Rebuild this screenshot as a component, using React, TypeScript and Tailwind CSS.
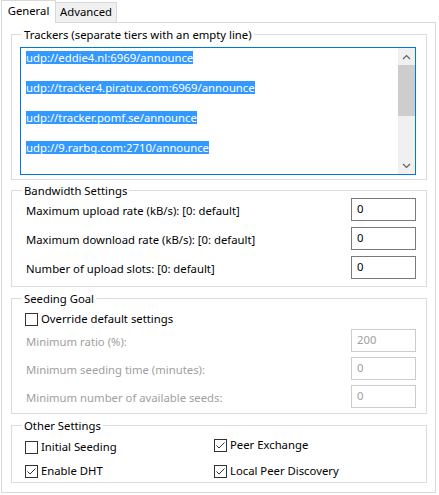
import React from 'react';

const trackers = [
  'udp://eddie4.nl:6969/announce',
  '',
  'udp://tracker4.piratux.com:6969/announce',
  '',
  'udp://tracker.pomf.se/announce',
  '',
  'udp://9.rarbg.com:2710/announce',
  '',
  '',
];

function Check({ checked }: { checked: boolean }) {
  return (
    <span className="w-[13px] h-[13px] border border-[#333333] bg-white shrink-0 flex items-center justify-center">
      {checked && (
        <svg width="11" height="11" viewBox="0 0 11 11">
          <path d="M1.5 5.5 L4 8 L9.5 2.5" fill="none" stroke="#333333" strokeWidth="1" />
        </svg>
      )}
    </span>
  );
}

function Group({ title, height, children }: { title: string; height: string; children: React.ReactNode }) {
  return (
    <div className={`border border-[#dcdcdc] ${height}`}>
      <span className="block w-fit -mt-[8px] ml-[10px] px-[2px] h-[15px] leading-[15px] bg-white text-black">
        {title}
      </span>
      {children}
    </div>
  );
}

function Field({ label, value, disabled }: { label: string; value: string; disabled?: boolean }) {
  return (
    <div className="flex items-center h-[23px] pl-[14px] pr-[10px]">
      <span className={`flex-1 mt-[4px] ${disabled ? 'text-[#a0a0a0]' : 'text-black'}`}>{label}</span>
      <div
        className={`w-[65px] h-[23px] border flex items-center pl-[5px] ${
          disabled ? 'border-[#cccccc] text-[#a0a0a0]' : 'border-[#7a7a7a] text-black'
        }`}
      >
        {value}
      </div>
    </div>
  );
}

export default function App() {
  return (
    <div
      className="w-[439px] h-[495px] bg-white pl-[1px] text-[11.3px]"
      style={{ fontFamily: '"Noto Sans", sans-serif' }}
    >
      <div className="w-[435px]">
        {/* tabs */}
        <div className="flex items-end h-[23px]">
          <div className="w-[55px] h-[23px] border-l border-t border-r border-[#d9d9d9] bg-white flex items-center justify-center pb-[1px] text-black">
            General
          </div>
          <div className="w-[61px] h-[21px] border-t border-r border-b border-[#d9d9d9] bg-[#f0f0f0] flex items-center justify-center text-black">
            Advanced
          </div>
          <div className="flex-1 h-[1px] bg-[#d9d9d9]" />
        </div>

        {/* panel */}
        <div className="h-[470px] border-l border-r border-b border-[#d9d9d9] pt-[11px] pl-[9px] pr-[8px]">
          <Group title="Trackers (separate tiers with an empty line)" height="h-[146px]">
            <div className="mt-[5px] ml-[8px] mr-[10px] h-[128px] border border-[#0078d7] flex overflow-hidden">
              <div className="flex-1 pl-[5px] pt-[2px]">
                {trackers.map((t, i) => (
                  <div key={i} className="h-[15px] flex items-center">
                    {t && (
                      <span className="inline-block h-[13px] leading-[13px] bg-[#3399ff] text-white">{t}</span>
                    )}
                  </div>
                ))}
              </div>
              <div className="w-[17px] bg-[#f0f0f0] flex flex-col">
                <div className="h-[17px] flex items-center justify-center">
                  <svg width="9" height="6" viewBox="0 0 9 6">
                    <path d="M1 5 L4.5 1.5 L8 5" fill="none" stroke="#606060" strokeWidth="1.2" />
                  </svg>
                </div>
                <div className="h-[51px] bg-[#cdcdcd]" />
                <div className="flex-1" />
                <div className="h-[17px] flex items-center justify-center">
                  <svg width="9" height="6" viewBox="0 0 9 6">
                    <path d="M1 1 L4.5 4.5 L8 1" fill="none" stroke="#606060" strokeWidth="1.2" />
                  </svg>
                </div>
              </div>
            </div>
          </Group>

          <div className="mt-[10px]">
            <Group title="Bandwidth Settings" height="h-[97px]">
              <div className="flex flex-col gap-[6px]">
                <Field label="Maximum upload rate (kB/s): [0: default]" value="0" />
                <Field label="Maximum download rate (kB/s): [0: default]" value="0" />
                <Field label="Number of upload slots: [0: default]" value="0" />
              </div>
            </Group>
          </div>

          <div className="mt-[11px]">
            <Group title="Seeding Goal" height="h-[116px]">
              <div className="flex items-center gap-[3px] ml-[13px] mt-[6px] h-[15px] text-black">
                <Check checked={false} />
                <span>Override default settings</span>
              </div>
              <div className="flex flex-col gap-[5px] mt-[2px]">
                <Field label="Minimum ratio (%):" value="200" disabled />
                <Field label="Minimum seeding time (minutes):" value="0" disabled />
                <Field label="Minimum number of available seeds:" value="0" disabled />
              </div>
            </Group>
          </div>

          <div className="mt-[11px]">
            <Group title="Other Settings" height="h-[58px]">
              <div className="flex ml-[13px] text-black">
                <div className="w-[189px] flex flex-col gap-[9px] pt-[7px]">
                  <div className="flex items-center gap-[3px] h-[15px]">
                    <Check checked={false} />
                    <span>Initial Seeding</span>
                  </div>
                  <div className="flex items-center gap-[3px] h-[15px]">
                    <Check checked={true} />
                    <span>Enable DHT</span>
                  </div>
                </div>
                <div className="flex flex-col gap-[11px] pt-[5px]">
                  <div className="flex items-center gap-[3px] h-[15px]">
                    <Check checked={true} />
                    <span>Peer Exchange</span>
                  </div>
                  <div className="flex items-center gap-[3px] h-[15px]">
                    <Check checked={true} />
                    <span>Local Peer Discovery</span>
                  </div>
                </div>
              </div>
            </Group>
          </div>
        </div>
      </div>
    </div>
  );
}
